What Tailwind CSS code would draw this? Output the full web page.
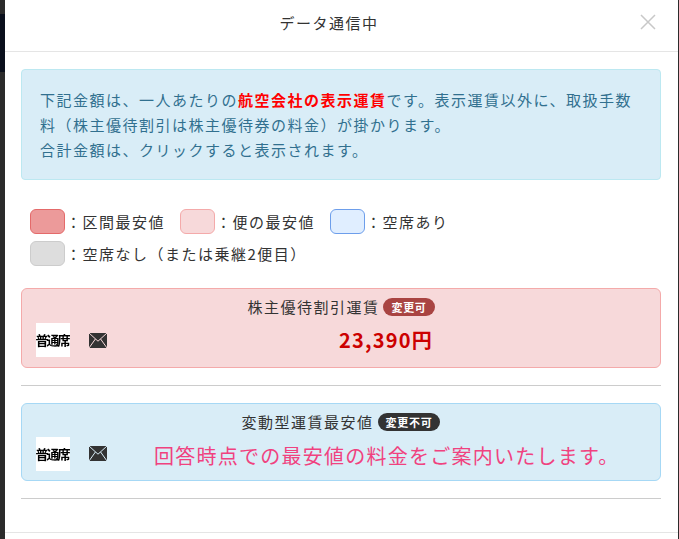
<!DOCTYPE html>
<html lang="ja">
<head>
  <meta charset="UTF-8" />
  <title>データ通信中</title>
  <script src="https://cdn.jsdelivr.net/npm/@tailwindcss/browser@4"></script>
</head>
<body class="bg-[#2b2b2b] h-[539px] overflow-hidden font-['Noto_Sans_CJK_JP','Noto_Sans',sans-serif] text-[#333]">
  <div class="relative h-[539px]">
    <!-- backdrop bits on the left edge -->
    <div class="absolute left-0 top-[14px] w-[5px] h-[58px] bg-[#0a0f1c]"></div>

    <div class="absolute left-[5px] top-0 w-[673px] h-[539px] bg-white flex flex-col">
      <div class="h-[52px] shrink-0 border-b border-[#e5e5e5] flex items-center justify-center relative pr-[25px]">
        <span class="text-[15px] tracking-[1.5px] leading-none mb-[6px]">データ通信中</span>
        <svg class="absolute right-[22px] top-[14px]" width="16" height="16" viewBox="0 0 16 16" fill="none" stroke="#c8c8c8" stroke-width="1.5"><path d="M1 1L15 15M15 1L1 15" /></svg>
      </div>

      <div class="pl-[16px] pr-[17px] pt-[17px]">
        <div class="h-[111px] bg-[#d9edf7] border border-[#bce8f1] rounded-[4px] pl-[18px] pr-[18px] pt-[17px] text-[#31708f] text-[15px] leading-[25px] tracking-[1.5px]">
          <p>下記金額は、一人あたりの<b class="text-[#ff0000] font-bold">航空会社の表示運賃</b>です。表示運賃以外に、取扱手数料（株主優待割引は株主優待券の料金）が掛かります。</p>
          <p>合計金額は、クリックすると表示されます。</p>
        </div>

        <div class="mt-[29px] pl-[9px] flex flex-col gap-[7px] text-[15px] tracking-[1.5px] leading-[25px]">
          <div class="flex items-center h-[25px] gap-[15px]">
            <div class="flex items-center">
              <span class="w-[35px] h-[25px] rounded-[6px] border border-[#e46a6a] bg-[#ec9a9a]"></span>
              <span class="ml-[1px]">：区間最安値</span>
            </div>
            <div class="flex items-center">
              <span class="w-[35px] h-[25px] rounded-[6px] border border-[#f4aaaa] bg-[#f7d9da]"></span>
              <span class="ml-[1px]">：便の最安値</span>
            </div>
            <div class="flex items-center">
              <span class="w-[35px] h-[25px] rounded-[6px] border border-[#6d9eeb] bg-[#e0eeff]"></span>
              <span class="ml-[1px]">：空席あり</span>
            </div>
          </div>
          <div class="flex items-center h-[25px]">
            <span class="w-[35px] h-[25px] rounded-[6px] border border-[#cccccc] bg-[#dddddd]"></span>
            <span class="ml-[1px]">：空席なし（または乗継2便目）</span>
          </div>
        </div>

        <div class="mt-[22px] h-[80px] bg-[#f7d9da] border border-[#f4aaaa] rounded-[6px]">
          <div class="flex items-center justify-center h-[34px] pt-[2px] text-[15px] tracking-[1.5px]">
            <span>株主優待割引運賃</span>
            <span class="ml-[4px] bg-[#a94442] text-white text-[11px] font-bold leading-[18px] px-[8px] tracking-[0.7px] rounded-full">変更可</span>
          </div>
          <div class="flex items-center pl-[14px]">
            <div class="w-[34px] h-[34px] bg-white flex items-center justify-center text-black text-[13px] font-bold tracking-[-2px] whitespace-nowrap blur-[0.4px] pr-[2px]">普通席</div>
            <svg class="ml-[19px]" width="18" height="15" viewBox="0 0 18 15"><rect width="18" height="15" fill="#333" /><path d="M0 0L9 8.2L18 0M0 15L6.4 6M18 15L11.6 6" fill="none" stroke="#f7d9da" stroke-width="1" /></svg>
            <span class="ml-[232px] text-[#cc0000] text-[20px] font-bold tracking-[1.2px]">23,390円</span>
          </div>
        </div>
        <hr class="mt-[17px] border-[#cccccc]" />

        <div class="mt-[17px] h-[78px] bg-[#d9edf7] border border-[#a6d8f5] rounded-[6px]">
          <div class="flex items-center justify-center h-[33px] pt-[3px] text-[15px] tracking-[1.5px]">
            <span>変動型運賃最安値</span>
            <span class="ml-[4px] bg-[#333] text-white text-[11px] font-bold leading-[18px] px-[8px] tracking-[0.7px] rounded-full">変更不可</span>
          </div>
          <div class="flex items-center pl-[14px]">
            <div class="w-[34px] h-[34px] bg-white flex items-center justify-center text-black text-[13px] font-bold tracking-[-2px] whitespace-nowrap blur-[0.4px] pr-[2px]">普通席</div>
            <svg class="ml-[19px] mb-[2px]" width="18" height="15" viewBox="0 0 18 15"><rect width="18" height="15" fill="#333" /><path d="M0 0L9 8.2L18 0M0 15L6.4 6M18 15L11.6 6" fill="none" stroke="#d9edf7" stroke-width="1" /></svg>
            <span class="ml-[47px] mt-[3px] text-[#f0427f] text-[20px] tracking-[1.25px]">回答時点での最安値の料金をご案内いたします。</span>
          </div>
        </div>
        <hr class="mt-[17px] border-[#cccccc]" />
      </div>

      <div class="mt-auto h-[7px] border-t border-[#e5e5e5]"></div>
    </div>
  </div>
</body>
</html>
